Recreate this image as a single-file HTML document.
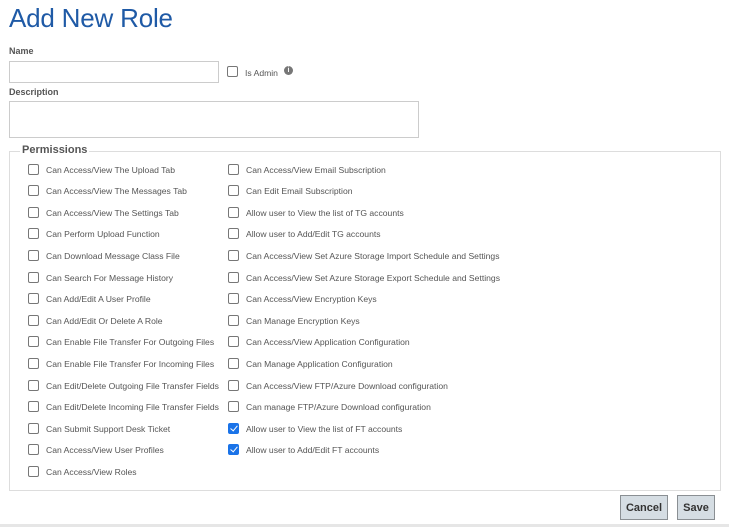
<!DOCTYPE html>
<html><head><style>
*{box-sizing:border-box;margin:0;padding:0}
body{width:729px;height:527px;background:#fff;font-family:"Liberation Sans",sans-serif;position:relative;overflow:hidden;color:#444}
.a{position:absolute}
h1{position:absolute;left:9px;top:3px;font-size:26px;font-weight:normal;color:#1f5aa6;letter-spacing:-0.2px}
.lbl{position:absolute;font-size:9px;font-weight:bold;color:#555}
.inp{position:absolute;border:1px solid #ccc;background:#fff}
.cb{position:absolute;width:11px;height:11px;border:1px solid #777;border-radius:2px;background:#fff}
.cb.on{background:#1a73e8;border-color:#1a73e8}
.cb.on::after{content:"";position:absolute;left:3px;top:0px;width:3px;height:6px;border:solid #fff;border-width:0 1.5px 1.5px 0;transform:rotate(40deg)}
.t{position:absolute;font-size:8.6px;color:#555;white-space:nowrap;line-height:11px}
.fs{position:absolute;left:9px;top:151px;width:712px;height:340px;border:1px solid #ddd}
.btn{position:absolute;top:495px;height:25px;background:#d5dde3;border:1px solid #8a8f93;font-size:11px;font-weight:bold;color:#333;text-align:center;line-height:13px;padding-top:6px}
</style></head><body>
<h1>Add New Role</h1>
<div class="lbl" style="left:9px;top:46px">Name</div>
<div class="inp" style="left:9px;top:61px;width:210px;height:22px"></div>
<div class="cb" style="left:227px;top:66px"></div>
<div class="t" style="left:245px;top:68px">Is Admin</div>
<div class="a" style="left:284px;top:66px;width:9px;height:9px;border-radius:50%;background:#777;color:#fff;font-size:7px;font-weight:bold;text-align:center;line-height:9px">i</div>
<div class="lbl" style="left:9px;top:87px">Description</div>
<div class="inp" style="left:9px;top:101px;width:410px;height:37px"></div>
<div class="fs"></div>
<div class="a" style="left:20px;top:144px;background:#fff;padding:0 2px;font-size:11px;font-weight:bold;color:#555">Permissions</div>
<div class="btn" style="left:620px;width:48px">Cancel</div>
<div class="btn" style="left:677px;width:38px">Save</div>
<div class="a" style="left:0;top:524px;width:729px;height:3px;background:#e6e6e6"></div>
<div class="cb" style="left:28px;top:164px"></div><div class="t" style="left:46px;top:165px">Can Access/View The Upload Tab</div>
<div class="cb" style="left:28px;top:185px"></div><div class="t" style="left:46px;top:186px">Can Access/View The Messages Tab</div>
<div class="cb" style="left:28px;top:207px"></div><div class="t" style="left:46px;top:208px">Can Access/View The Settings Tab</div>
<div class="cb" style="left:28px;top:228px"></div><div class="t" style="left:46px;top:229px">Can Perform Upload Function</div>
<div class="cb" style="left:28px;top:250px"></div><div class="t" style="left:46px;top:251px">Can Download Message Class File</div>
<div class="cb" style="left:28px;top:272px"></div><div class="t" style="left:46px;top:273px">Can Search For Message History</div>
<div class="cb" style="left:28px;top:293px"></div><div class="t" style="left:46px;top:294px">Can Add/Edit A User Profile</div>
<div class="cb" style="left:28px;top:315px"></div><div class="t" style="left:46px;top:316px">Can Add/Edit Or Delete A Role</div>
<div class="cb" style="left:28px;top:336px"></div><div class="t" style="left:46px;top:337px">Can Enable File Transfer For Outgoing Files</div>
<div class="cb" style="left:28px;top:358px"></div><div class="t" style="left:46px;top:359px">Can Enable File Transfer For Incoming Files</div>
<div class="cb" style="left:28px;top:380px"></div><div class="t" style="left:46px;top:381px">Can Edit/Delete Outgoing File Transfer Fields</div>
<div class="cb" style="left:28px;top:401px"></div><div class="t" style="left:46px;top:402px">Can Edit/Delete Incoming File Transfer Fields</div>
<div class="cb" style="left:28px;top:423px"></div><div class="t" style="left:46px;top:424px">Can Submit Support Desk Ticket</div>
<div class="cb" style="left:28px;top:444px"></div><div class="t" style="left:46px;top:445px">Can Access/View User Profiles</div>
<div class="cb" style="left:28px;top:466px"></div><div class="t" style="left:46px;top:467px">Can Access/View Roles</div>
<div class="cb" style="left:228px;top:164px"></div><div class="t" style="left:246px;top:165px">Can Access/View Email Subscription</div>
<div class="cb" style="left:228px;top:185px"></div><div class="t" style="left:246px;top:186px">Can Edit Email Subscription</div>
<div class="cb" style="left:228px;top:207px"></div><div class="t" style="left:246px;top:208px">Allow user to View the list of TG accounts</div>
<div class="cb" style="left:228px;top:228px"></div><div class="t" style="left:246px;top:229px">Allow user to Add/Edit TG accounts</div>
<div class="cb" style="left:228px;top:250px"></div><div class="t" style="left:246px;top:251px">Can Access/View Set Azure Storage Import Schedule and Settings</div>
<div class="cb" style="left:228px;top:272px"></div><div class="t" style="left:246px;top:273px">Can Access/View Set Azure Storage Export Schedule and Settings</div>
<div class="cb" style="left:228px;top:293px"></div><div class="t" style="left:246px;top:294px">Can Access/View Encryption Keys</div>
<div class="cb" style="left:228px;top:315px"></div><div class="t" style="left:246px;top:316px">Can Manage Encryption Keys</div>
<div class="cb" style="left:228px;top:336px"></div><div class="t" style="left:246px;top:337px">Can Access/View Application Configuration</div>
<div class="cb" style="left:228px;top:358px"></div><div class="t" style="left:246px;top:359px">Can Manage Application Configuration</div>
<div class="cb" style="left:228px;top:380px"></div><div class="t" style="left:246px;top:381px">Can Access/View FTP/Azure Download configuration</div>
<div class="cb" style="left:228px;top:401px"></div><div class="t" style="left:246px;top:402px">Can manage FTP/Azure Download configuration</div>
<div class="cb on" style="left:228px;top:423px"></div><div class="t" style="left:246px;top:424px">Allow user to View the list of FT accounts</div>
<div class="cb on" style="left:228px;top:444px"></div><div class="t" style="left:246px;top:445px">Allow user to Add/Edit FT accounts</div>
</body></html>
